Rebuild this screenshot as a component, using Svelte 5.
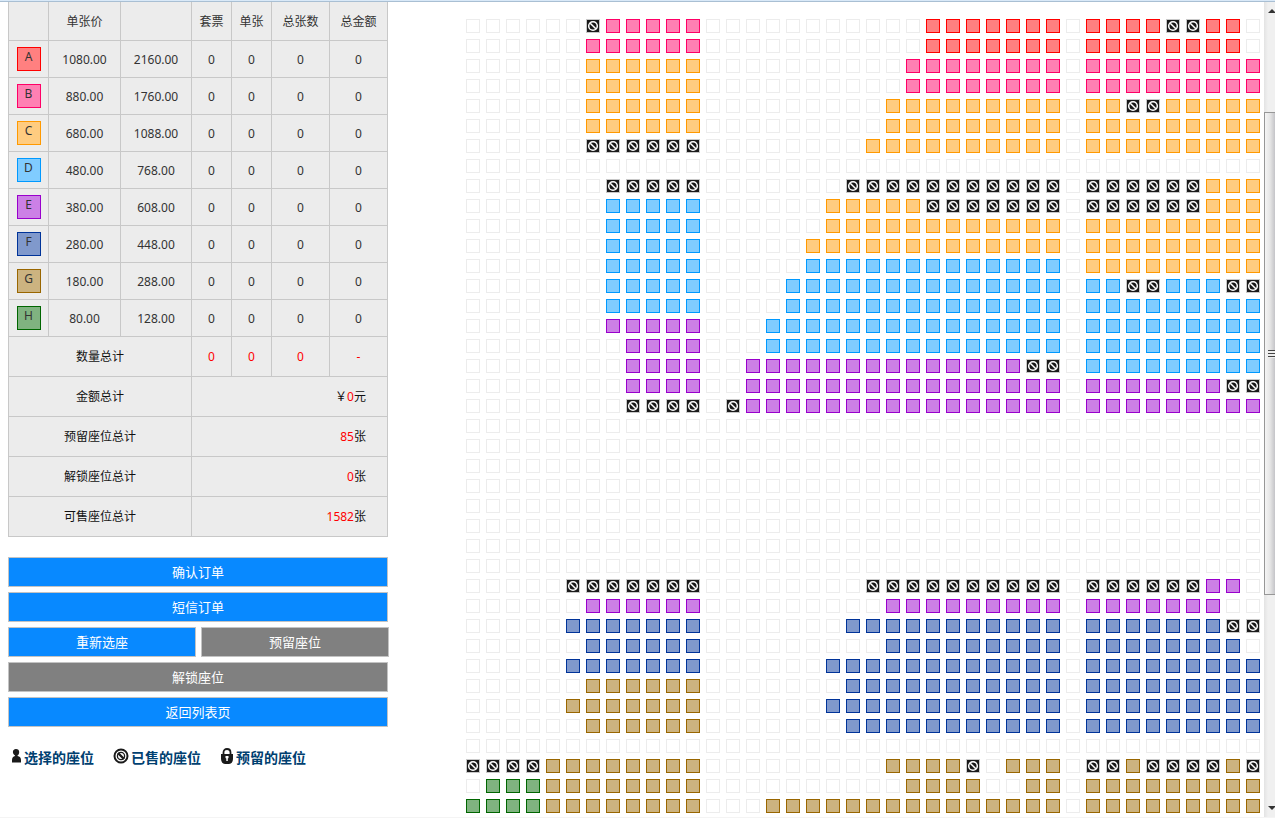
<script>
  const tiers = [
    { id: 'A', single: '1080.00', pair: '2160.00' },
    { id: 'B', single: '880.00', pair: '1760.00' },
    { id: 'C', single: '680.00', pair: '1088.00' },
    { id: 'D', single: '480.00', pair: '768.00' },
    { id: 'E', single: '380.00', pair: '608.00' },
    { id: 'F', single: '280.00', pair: '448.00' },
    { id: 'G', single: '180.00', pair: '288.00' },
    { id: 'H', single: '80.00', pair: '128.00' }
  ];

  const totals = [
    { label: '金额总计', before: '￥', value: '0', unit: '元' },
    { label: '预留座位总计', before: '', value: '85', unit: '张' },
    { label: '解锁座位总计', before: '', value: '0', unit: '张' },
    { label: '可售座位总计', before: '', value: '1582', unit: '张' }
  ];

  // Each row: left block, middle block, right block. A letter and count is a run of
  // seats of that tier, x is sold, a dot is a gap. Left and middle blocks end at the aisle.
  const plan = [
    ['x1B5', 'A7', 'A4x2A2'],
    ['B6', 'A7', 'A8'],
    ['C6', 'B8', 'B9'],
    ['C6', 'B8', 'B9'],
    ['C6', 'C9', 'C2x2C5'],
    ['C6', 'C9', 'C9'],
    ['x6', 'C10', 'C9'],
    ['', '', ''],
    ['x5', 'x11', 'x6C3'],
    ['D5', 'C5x7', 'x6C3'],
    ['D5', 'C12', 'C9'],
    ['D5', 'C13', 'C9'],
    ['D5', 'D13', 'C9'],
    ['D5', 'D14', 'D2x2D3x2'],
    ['D5', 'D14', 'D9'],
    ['E5', 'D15', 'D9'],
    ['E4', 'D15', 'D9'],
    ['E4', 'E14x2', 'D9'],
    ['E4', 'E16', 'E7x2'],
    ['x4', 'x1E16', 'E9'],
    ['', '', ''],
    ['', '', ''],
    ['', '', ''],
    ['', '', ''],
    ['', '', ''],
    ['', '', ''],
    ['', '', ''],
    ['', '', ''],
    ['x7', 'x10', 'x6E2'],
    ['E6', 'E9', 'E7'],
    ['F7', 'F11', 'F7x2'],
    ['F6', 'F9', 'F8'],
    ['F7', 'F12', 'F9'],
    ['G6', 'F11', 'F9'],
    ['G7', 'F12', 'F9'],
    ['G6', 'F11', 'F9'],
    ['', '', ''],
    ['x4G8', 'G4x1.1G3', 'x2G1x4G1x1'],
    ['H3G8', 'G4.2G2', 'G9'],
    ['H4G8', 'G15', 'G9']
  ];

  const expand = (runs) => runs.replace(/([A-Hx.])(\d+)/g, (_, c, n) => c.repeat(+n));
  const seats = plan.flatMap(([left, middle, right]) => [
    ...expand(left).padStart(12, '.'),
    ...expand(middle).padStart(18, '.'),
    '.',
    ...expand(right).padEnd(9, '.')
  ]);
</script>

<div class="page">
  <aside>
    <table>
      <colgroup>
        <col class="c-tier" /><col class="c-price" /><col class="c-pair" /><col class="c-small" />
        <col class="c-small" /><col class="c-wide" /><col class="c-wide" />
      </colgroup>
      <thead>
        <tr>
          <th></th><th>单张价</th><th></th><th>套票</th><th>单张</th><th>总张数</th><th>总金额</th>
        </tr>
      </thead>
      <tbody>
        {#each tiers as t}
          <tr>
            <td class="tier"><span class="badge {t.id}">{t.id}</span></td>
            <td>{t.single}</td><td>{t.pair}</td><td>0</td><td>0</td><td>0</td><td>0</td>
          </tr>
        {/each}
      </tbody>
      <tfoot>
        <tr>
          <th colspan="3">数量总计</th>
          <td class="red">0</td><td class="red">0</td><td class="red">0</td><td class="red">-</td>
        </tr>
        {#each totals as t}
          <tr>
            <th colspan="3">{t.label}</th>
            <td colspan="4" class="sum">{t.before}<span class="red">{t.value}</span>{t.unit}</td>
          </tr>
        {/each}
      </tfoot>
    </table>

    <div class="actions">
      <button>确认订单</button>
      <button>短信订单</button>
      <div class="pair">
        <button>重新选座</button>
        <button class="muted">预留座位</button>
      </div>
      <button class="muted">解锁座位</button>
      <button>返回列表页</button>
    </div>

    <div class="legend">
      <span>
        <svg width="11" height="16" viewBox="0 0 11 16">
          <path fill="#1a1a1a" d="M5 1c2 0 3.200 1.300 3.200 3S7.400 7 6.500 7.400V8c2.300.4 3.500 1.600 3.500 4v2.500H1V12c0-2.400 1.200-3.600 3-4v-.6C2.700 6.800 1.900 5.600 1.900 4S3 1 5 1z" />
        </svg>选择的座位
      </span>
      <span>
        <svg width="16" height="16" viewBox="0 0 16 16" fill="none" stroke="#1a1a1a">
          <circle cx="8" cy="8" r="6.500" stroke-width="2" />
          <circle cx="8" cy="8" r="3.600" stroke-width="1.300" />
          <path d="M5 5l6 6" stroke-width="2.400" />
        </svg>已售的座位
      </span>
      <span>
        <svg width="14" height="16" viewBox="0 0 14 16">
          <path fill="none" stroke="#1a1a1a" stroke-width="1.800" d="M3.500 7V4.500C3.500 2 5 1 7 1s3.500 1 3.500 3.500V7" />
          <path fill="#1a1a1a" d="M1 6h12v5c0 3-2 5-4 5H5c-2 0-4-2-4-5z" />
          <path fill="#fff" d="M5.500 8h3v2l-.7.6V13H6.300v-2.400L5.500 10z" />
        </svg>预留的座位
      </span>
    </div>
  </aside>

  <main>
    <div class="seats">
      {#each seats as s}
        {#if s === '.'}
          <i class="seat"></i>
        {:else if s === 'x'}
          <i class="seat sold">
            <svg width="12" height="12" viewBox="0 0 12 12" fill="none" stroke="#fff">
              <circle cx="6" cy="6" r="4.300" stroke-width="1.500" />
              <path d="M3.200 3.200l5.600 5.600" stroke-width="1.500" />
            </svg>
          </i>
        {:else}
          <button class="seat {s}" aria-label={s}></button>
        {/if}
      {/each}
    </div>
  </main>

  <div class="scrollbar">
    <svg class="arrow" width="11" height="8" viewBox="0 0 11 8"><path fill="#333" d="M4 6l4-4 4 4z" /></svg>
    <div class="thumb"><span class="grip"></span></div>
    <svg class="arrow" width="11" height="8" viewBox="0 0 11 8"><path fill="#333" d="M4 2l4 4 4-4z" /></svg>
  </div>
</div>

<style>
  :global(body) {
    margin: 0;
    background: #fff;
    overflow: hidden;
  }

  .page {
    display: flex;
    box-sizing: border-box;
    height: 100vh;
    padding-top: 2px;
    border-bottom: 1px solid #f4f4f4;
    background: linear-gradient(#d9e9f8 0 1px, #a9bfd3 1px 2px, #fff 2px);
    font: 12px/18px 'Noto Sans', 'Noto Sans CJK SC', sans-serif;
    color: #333;
    overflow: hidden;
  }

  aside {
    flex: none;
    width: 381px;
    padding-left: 8px;
  }

  table {
    width: 380px;
    table-layout: fixed;
    border-collapse: collapse;
    background: #ececec;
  }
  .c-tier { width: 40px; }
  .c-price { width: 72px; }
  .c-pair { width: 71px; }
  .c-small { width: 40px; }
  .c-wide { width: 58px; }

  th, td {
    box-sizing: border-box;
    height: 37px;
    padding: 2px 0 0;
    border: 1px solid #c8c8c8;
    font-weight: 400;
    text-align: center;
  }
  thead th {
    height: 38px;
    border-top: 0;
  }
  .tier { padding: 0; }
  tfoot th, tfoot td {
    height: 40px;
    color: #111;
  }
  tfoot .sum {
    padding-right: 21px;
    text-align: right;
  }
  tfoot .red, .red { color: #f00; }

  .badge {
    display: block;
    box-sizing: border-box;
    width: 24px;
    height: 24px;
    margin: 0 auto;
    border: 1px solid;
    line-height: 18px;
  }

  .actions {
    display: flex;
    flex-direction: column;
    gap: 5px;
    margin-top: 20px;
  }
  .actions button {
    height: 30px;
    width: 380px;
    padding: 0;
    border: 1px solid #c3c3c3;
    background: #0889ff;
    color: #fff;
    font: 13px/20px 'Noto Sans', 'Noto Sans CJK SC', sans-serif;
  }
  .actions .pair {
    display: flex;
    gap: 5px;
  }
  .actions .pair button { width: 188px; }
  .actions .muted { background: #808080; }

  .legend {
    display: flex;
    gap: 19px;
    margin-top: 21px;
    padding-left: 3px;
    color: #004070;
    font-size: 14px;
    font-weight: 700;
    line-height: 20px;
    white-space: nowrap;
  }
  .legend span { display: flex; }
  .legend svg { margin-right: 2px; }

  main {
    flex: 1;
    min-width: 0;
    padding: 17px 0 0 77px;
  }
  .seats {
    display: grid;
    grid-template-columns: repeat(40, 14px);
    grid-auto-rows: 14px;
    gap: 6px;
  }
  .seat {
    display: block;
    box-sizing: border-box;
    width: 14px;
    height: 14px;
    padding: 0;
    border: 1px solid #ececec;
    border-radius: 0;
  }
  .sold {
    border-color: #c8c8c8;
    background: #1a1a1a;
  }
  .sold svg { display: block; }

  .A { border-color: #f00; background: #ff8080; }
  .B { border-color: #f06; background: #ff80b3; }
  .C { border-color: #f90; background: #ffcc80; }
  .D { border-color: #09f; background: #80ccff; }
  .E { border-color: #90c; background: #cc80e6; }
  .F { border-color: #039; background: #8099cc; }
  .G { border-color: #960; background: #ccb380; }
  .H { border-color: #060; background: #80b380; }

  .scrollbar {
    display: flex;
    flex: none;
    flex-direction: column;
    box-sizing: border-box;
    width: 11px;
    padding: 5px 0;
    background: linear-gradient(90deg, #e3e3e3, #f0f0f0 4px);
  }
  .arrow { flex: none; }
  .thumb {
    display: flex;
    align-items: center;
    justify-content: flex-end;
    box-sizing: border-box;
    height: 60%;
    margin: 97px 0 auto;
    border: 1px solid #979797;
    border-right: 0;
    background: linear-gradient(90deg, #f5f5f5, #e6e6e6 50%, #c4c4c8);
  }
  .grip {
    width: 7px;
    height: 8px;
    background: repeating-linear-gradient(#444 0 1px, #eee 1px 3px);
  }
</style>
